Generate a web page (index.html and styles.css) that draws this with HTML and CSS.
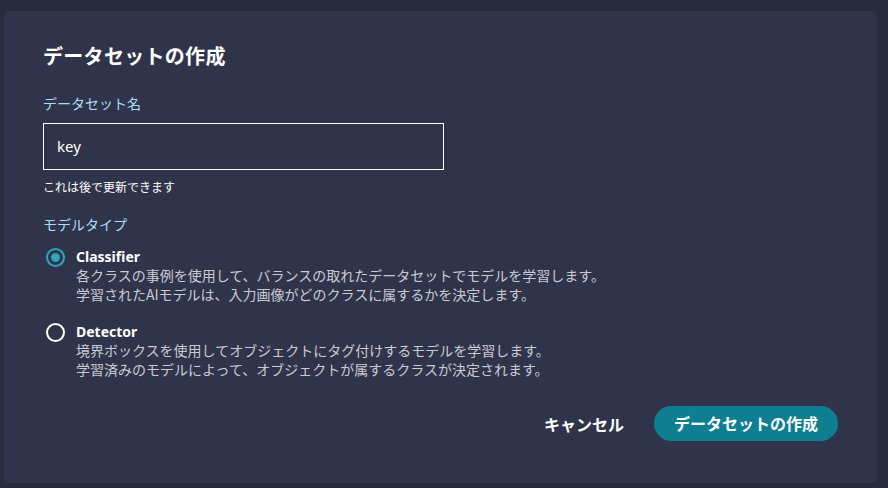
FILE: index.html
```html
<!DOCTYPE html>
<html lang="ja">
<head>
<meta charset="utf-8">
<link rel="stylesheet" href="styles.css">
</head>
<body>
<div class="card">
  <h1 class="title">データセットの作成</h1>
  <div class="field">
    <label class="label">データセット名</label>
    <div class="input">key</div>
    <div class="hint">これは後で更新できます</div>
  </div>
  <div class="field types">
    <div class="label">モデルタイプ</div>
    <div class="option">
      <span class="radio checked"></span>
      <div class="opt-body">
        <div class="opt-title">Classifier</div>
        <div class="opt-desc">各クラスの事例を使用して、バランスの取れたデータセットでモデルを学習します。<br>学習されたAIモデルは、入力画像がどのクラスに属するかを決定します。</div>
      </div>
    </div>
    <div class="option">
      <span class="radio"></span>
      <div class="opt-body">
        <div class="opt-title">Detector</div>
        <div class="opt-desc">境界ボックスを使用してオブジェクトにタグ付けするモデルを学習します。<br>学習済みのモデルによって、オブジェクトが属するクラスが決定されます。</div>
      </div>
    </div>
  </div>
  <div class="actions">
    <button class="btn cancel">キャンセル</button>
    <button class="btn primary">データセットの作成</button>
  </div>
</div>
</body>
</html>
```

FILE: styles.css
```css
* { box-sizing: border-box; }
html, body { margin: 0; padding: 0; }
body {
  background: #282b3c;
  font-family: "Noto Sans CJK JP", "Noto Sans", sans-serif;
  color: #ffffff;
  width: 888px;
  height: 488px;
  overflow: hidden;
}
.card {
  margin: 11px 0 0 4px;
  width: 873px;
  height: 472px;
  background: #30344a;
  border-radius: 6px;
  padding: 31px 39px 0 39px;
  display: flex;
  flex-direction: column;
}
.title {
  margin: 0;
  font-size: 20px;
  font-weight: 700;
  line-height: 28px;
  letter-spacing: 0.3px;
}
.field { margin-top: 23px; display: flex; flex-direction: column; }
.label {
  color: #a9def0;
  font-size: 14px;
  line-height: 20px;
}
.input {
  margin-top: 10px;
  width: 401px;
  height: 47px;
  border: 1px solid #ffffff;
  padding: 0 13px;
  font-family: "Noto Sans", sans-serif;
  font-size: 15px;
  line-height: 45px;
  color: #ffffff;
}
.hint {
  margin-top: 8px;
  font-size: 12px;
  line-height: 17px;
}
.types { margin-top: 19px; }
.option {
  display: flex;
  gap: 11px;
  margin-top: 13px;
}
.option + .option { margin-top: 18px; }
.radio {
  width: 19px;
  height: 19px;
  border: 2px solid #ffffff;
  border-radius: 50%;
  margin-top: 1px;
  margin-left: 3px;
  flex: none;
  display: flex;
  align-items: center;
  justify-content: center;
}
.radio.checked { border-color: #2aa6b8; }
.radio.checked::after {
  content: "";
  width: 9px;
  height: 9px;
  border-radius: 50%;
  background: #2aa6b8;
}
.opt-title {
  font-family: "Noto Sans", sans-serif;
  font-weight: 700;
  font-size: 14px;
  line-height: 19px;
}
.opt-desc {
  color: #c9cbd3;
  font-size: 14px;
  line-height: 19px;
}
.actions {
  margin-top: 27px;
  display: flex;
  justify-content: flex-end;
  align-items: center;
  gap: 30px;
}
.btn {
  font-family: "Noto Sans CJK JP", sans-serif;
  font-weight: 700;
  font-size: 16px;
  color: #ffffff;
  border: none;
  background: none;
  padding: 0;
  cursor: pointer;
}
.primary {
  background: #0e7f90;
  border-radius: 18px;
  height: 35px;
  width: 184px;
  line-height: 35px;
}
```
